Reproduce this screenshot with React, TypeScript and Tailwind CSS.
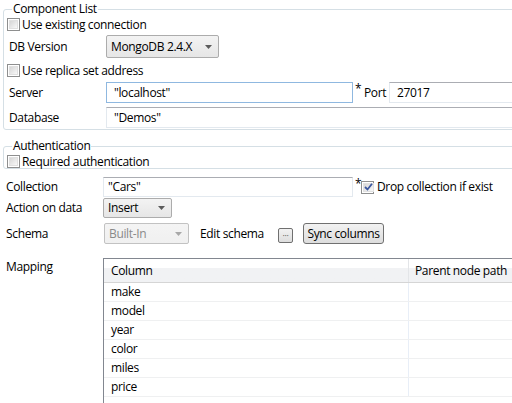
import React from "react";

function Checkbox({ checked = false }: { checked?: boolean }) {
  return (
    <span className="w-[13px] h-[13px] shrink-0 border border-[#8e8f8f] bg-white p-px flex">
      <span className="flex-1 flex items-center justify-center bg-linear-to-br from-[#d6d6d6] to-[#f8f8f8] border border-[#e0e0e0]">
        {checked && (
          <svg width="9" height="8" viewBox="0 0 9 8">
            <path d="M1 4 L3.5 6.5 L8 0.8" fill="none" stroke="#3a57a0" strokeWidth="1.8" />
          </svg>
        )}
      </span>
    </span>
  );
}

function Arrow({ color = "#5b5b5b" }: { color?: string }) {
  return (
    <svg width="7" height="4" viewBox="0 0 7 4" className="shrink-0">
      <path d="M0 0 H7 L3.5 4 Z" fill={color} />
    </svg>
  );
}

function Combo({
  text,
  className,
  disabled = false,
}: {
  text: string;
  className: string;
  disabled?: boolean;
}) {
  return (
    <div
      className={
        "flex items-center border rounded-[2px] pl-[4px] bg-linear-to-b " +
        (disabled
          ? "border-[#c2c2c2] from-[#f4f4f4] to-[#f0f0f0] text-[#8a8a8a] "
          : "border-[#acacac] from-[#f3f3f3] to-[#e6e6e6] ") +
        className
      }
    >
      <span className="flex-1">{text}</span>
      <span className="w-[20px] flex justify-center">
        <Arrow color={disabled ? "#a8a8a8" : "#5b5b5b"} />
      </span>
    </div>
  );
}

function TextBox({ value, className }: { value: string; className: string }) {
  return (
    <div className={"flex items-center border bg-white " + className}>{value}</div>
  );
}

export default function App() {
  const rows = ["make", "model", "year", "color", "miles", "price"];

  return (
    <div className="w-[512px] h-[403px] overflow-hidden bg-white text-[12px] leading-[16px] tracking-[-0.35px] text-black font-['Open_Sans','Noto_Sans',sans-serif]">
      <div className="w-[580px]">
        <fieldset className="mt-px ml-[3px] border border-[#d5dfe5] rounded-[3px] pb-px">
          <legend className="ml-[8px] px-px leading-[16px]">Component List</legend>
          <div className="mt-px ml-[3px] h-[13px] flex items-center gap-[2px]">
            <Checkbox />
            <span>Use existing connection</span>
          </div>
          <div className="mt-[4px] h-[23px] flex items-center">
            <span className="w-[102px] pl-[5px]">DB Version</span>
            <Combo text="MongoDB 2.4.X" className="w-[113px] h-[23px]" />
          </div>
          <div className="mt-[6px] ml-[3px] h-[13px] flex items-center gap-[2px]">
            <Checkbox />
            <span>Use replica set address</span>
          </div>
          <div className="mt-[5px] h-[21px] flex items-center">
            <span className="w-[102px] pl-[5px]">Server</span>
            <TextBox value={'"localhost"'} className="w-[247px] h-[21px] pl-[7px] border-[#8fb8e0]" />
            <span className="ml-[2px] w-[9px] self-start leading-[14px]">*</span>
            <span className="w-[25px]">Port</span>
            <TextBox
              value="27017"
              className="flex-1 h-[21px] pl-[7px] border-[#e3e9ef] border-t-[#abadb3]"
            />
          </div>
          <div className="mt-[4px] h-[21px] flex items-center">
            <span className="w-[102px] pl-[5px]">Database</span>
            <TextBox
              value={'"Demos"'}
              className="flex-1 h-[21px] pl-[7px] border-[#e3e9ef] border-t-[#abadb3]"
            />
          </div>
        </fieldset>

        <fieldset className="mt-[8px] ml-[3px] border border-[#d5dfe5] rounded-[3px]">
          <legend className="ml-[8px] px-px leading-[16px]">Authentication</legend>
          <div className="mt-px ml-[3px] h-[13px] flex items-center gap-[2px]">
            <Checkbox />
            <span>Required authentication</span>
          </div>
        </fieldset>

        <div className="mt-[8px] h-[20px] flex items-center">
          <span className="w-[103px] pl-[6px]">Collection</span>
          <TextBox value={'"Cars"'} className="w-[250px] h-[20px] pl-[4px] border-[#e3e9ef] border-t-[#abadb3]" />
          <span className="ml-[2px] w-[6px] self-start leading-[14px]">*</span>
          <Checkbox checked />
          <span className="ml-[3px]">Drop collection if exist</span>
        </div>
        <div className="mt-px h-[20px] flex items-center">
          <span className="w-[103px] pl-[6px]">Action on data</span>
          <Combo text="Insert" className="w-[69px] h-[20px]" />
        </div>
        <div className="mt-[5px] h-[21px] flex items-center">
          <span className="w-[104px] pl-[6px]">Schema</span>
          <Combo text="Built-In" className="w-[85px] h-[21px]" disabled />
          <span className="ml-[11px] w-[78px]">Edit schema</span>
          <button className="mt-[4px] w-[15px] h-[15px] border border-[#707070] rounded-[2px] bg-linear-to-b from-[#f2f2f2] to-[#dddddd] flex items-center justify-center text-[9px] leading-[9px] text-[#555]">
            ···
          </button>
          <button className="ml-[10px] w-[81px] h-[21px] border border-[#707070] rounded-[3px] bg-linear-to-b from-[#f2f2f2] to-[#dddddd] flex items-center justify-center">
            Sync columns
          </button>
        </div>

        <div className="mt-[14px] flex">
          <span className="w-[103px] pl-[6px] pt-[1px]">Mapping</span>
          <div className="flex-1 h-[146px] border border-[#828790]">
            <div className="h-[24px] flex border-b border-[#d5d5d5] bg-linear-to-b from-white from-40% to-[#f1f2f4] to-40%">
              <div className="w-[305px] pl-[7px] flex items-center border-r border-[#e3e5e8]">Column</div>
              <div className="flex-1 pl-[6px] flex items-center">Parent node path</div>
            </div>
            {rows.map((r) => (
              <div key={r} className="h-[19px] flex border-b border-[#eff0f1]">
                <div className="w-[305px] pl-[7px] flex items-center border-r border-[#e8eef7]">{r}</div>
                <div className="flex-1" />
              </div>
            ))}
          </div>
        </div>
      </div>
    </div>
  );
}
